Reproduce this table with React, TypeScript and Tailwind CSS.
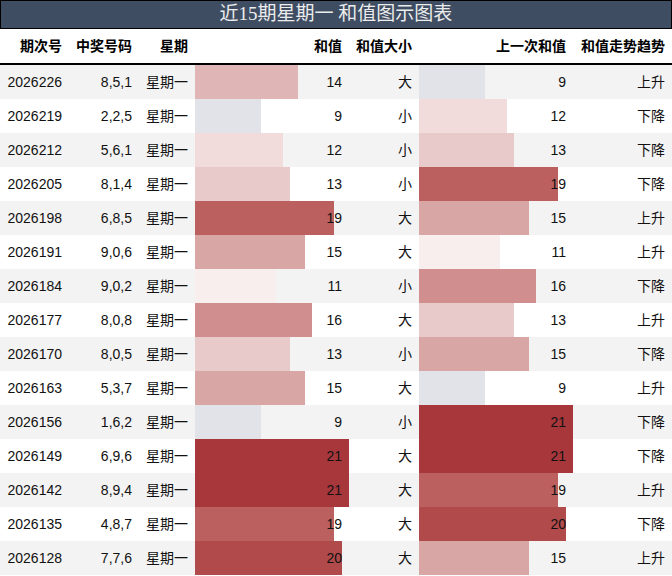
import React from "react";

type Row = { id: string; nums: string; sum: number; size: string; prev: number; trend: string };

const rows: Row[] = [
  { id: "2026226", nums: "8,5,1", sum: 14, size: "大", prev: 9, trend: "上升" },
  { id: "2026219", nums: "2,2,5", sum: 9, size: "小", prev: 12, trend: "下降" },
  { id: "2026212", nums: "5,6,1", sum: 12, size: "小", prev: 13, trend: "下降" },
  { id: "2026205", nums: "8,1,4", sum: 13, size: "小", prev: 19, trend: "下降" },
  { id: "2026198", nums: "6,8,5", sum: 19, size: "大", prev: 15, trend: "上升" },
  { id: "2026191", nums: "9,0,6", sum: 15, size: "大", prev: 11, trend: "上升" },
  { id: "2026184", nums: "9,0,2", sum: 11, size: "小", prev: 16, trend: "下降" },
  { id: "2026177", nums: "8,0,8", sum: 16, size: "大", prev: 13, trend: "上升" },
  { id: "2026170", nums: "8,0,5", sum: 13, size: "小", prev: 15, trend: "下降" },
  { id: "2026163", nums: "5,3,7", sum: 15, size: "大", prev: 9, trend: "上升" },
  { id: "2026156", nums: "1,6,2", sum: 9, size: "小", prev: 21, trend: "下降" },
  { id: "2026149", nums: "6,9,6", sum: 21, size: "大", prev: 21, trend: "下降" },
  { id: "2026142", nums: "8,9,4", sum: 21, size: "大", prev: 19, trend: "上升" },
  { id: "2026135", nums: "4,8,7", sum: 19, size: "大", prev: 20, trend: "下降" },
  { id: "2026128", nums: "7,7,6", sum: 20, size: "大", prev: 15, trend: "上升" },
];

const colorFor: Record<number, string> = {
  9: "bg-[#e2e2e9]",
  11: "bg-[#f8eeee]",
  12: "bg-[#f1dcdb]",
  13: "bg-[#e8caca]",
  14: "bg-[#e0b5b5]",
  15: "bg-[#d9a6a6]",
  16: "bg-[#d08e8e]",
  19: "bg-[#bb5f5f]",
  20: "bg-[#b04a4b]",
  21: "bg-[#a8373c]",
};

const font = { fontFamily: '"Liberation Sans", "Noto Sans CJK SC", sans-serif' };

function BarCell({ v }: { v: number }) {
  return (
    <div className="relative h-[34px] flex items-center justify-end pr-[7px]">
      <div
        className={`absolute left-0 top-0 bottom-0 ${colorFor[v]}`}
        style={{ width: `${(v / 21) * 154}px` }}
      />
      <span className="relative">{v}</span>
    </div>
  );
}

export default function App() {
  const cols = "grid grid-cols-[69px_70px_56px_154px_70px_154px_99px]";
  return (
    <div className="w-[672px] h-[576px] bg-white overflow-hidden text-[14px] text-[#111]" style={font}>
      <div
        className="h-[29px] border border-black bg-[#3f4d63] flex items-center justify-center text-[19px] text-[#ececec]"
        style={{ fontFamily: '"Liberation Serif", "Noto Sans CJK SC", serif' }}
      >
        近15期星期一 和值图示图表
      </div>
      <div className={`${cols} h-[36px] border-b-2 border-black font-bold text-black`}>
        {["期次号", "中奖号码", "星期", "和值", "和值大小", "上一次和值", "和值走势趋势"].map((h) => (
          <div key={h} className="h-[34px] flex items-center justify-end pr-[7px]">
            {h}
          </div>
        ))}
      </div>
      {rows.map((r, i) => (
        <div key={r.id} className={`${cols} h-[34px] ${i % 2 === 0 ? "bg-[#f3f3f3]" : "bg-white"}`}>
          <div className="flex items-center justify-end pr-[7px]">{r.id}</div>
          <div className="flex items-center justify-end pr-[7px]">{r.nums}</div>
          <div className="flex items-center justify-end pr-[7px]">星期一</div>
          <BarCell v={r.sum} />
          <div className="flex items-center justify-end pr-[7px]">{r.size}</div>
          <BarCell v={r.prev} />
          <div className="flex items-center justify-end pr-[7px]">{r.trend}</div>
        </div>
      ))}
    </div>
  );
}
